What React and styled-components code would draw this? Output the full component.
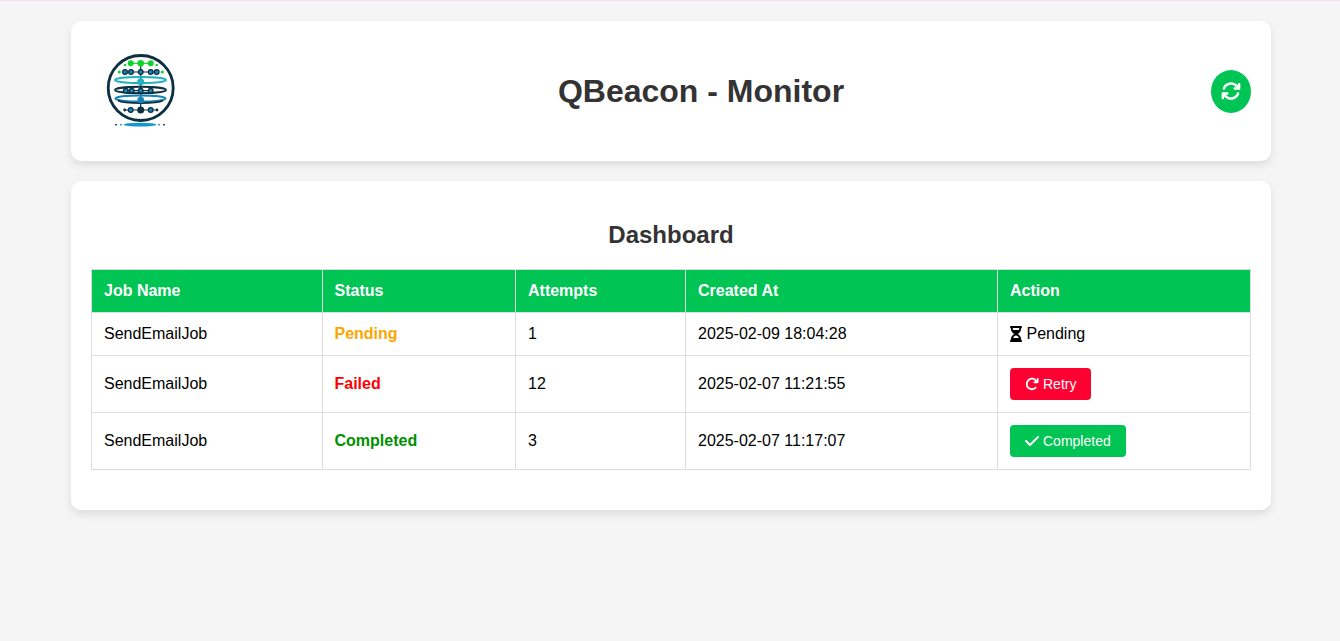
import styled, { createGlobalStyle } from 'styled-components';
import { FaHourglassHalf } from 'react-icons/fa';
import { FaArrowsRotate, FaArrowRotateRight, FaCheck } from 'react-icons/fa6';

const jobs = [
  { name: 'SendEmailJob', status: 'Pending', attempts: 1, created: '2025-02-09 18:04:28' },
  { name: 'SendEmailJob', status: 'Failed', attempts: 12, created: '2025-02-07 11:21:55' },
  { name: 'SendEmailJob', status: 'Completed', attempts: 3, created: '2025-02-07 11:17:07' },
];

const statusColors = {
  Pending: '#ffa500',
  Failed: '#ff0000',
  Completed: '#008f00',
};

// logo nodes, one list per row of the drawing
const nodeRows = [
  { y: 31, xs: [34, 40, 49.7, 59.7, 65.7] },
  { y: 49.7, xs: [34.7, 40.7, 49.7, 59.7] },
  { y: 69, xs: [39.7, 59.7] },
];

function Logo() {
  const dark = '#0d2f3f';
  const blue = '#1583b5';
  const teal = '#22b2bd';
  const green = '#0fd32c';
  return (
    <svg width="100" height="100" viewBox="0 0 100 100" aria-label="QBeacon logo">
      <circle cx="49.7" cy="47" r="32.5" fill="none" stroke={dark} strokeWidth="2.8" />
      <path d="M49.7 23V70" stroke={dark} strokeWidth="1.2" />
      <path d="M39.7 22.3H59.7" stroke={green} strokeWidth="1.2" />
      <circle cx="39.7" cy="22.3" r="3" fill={green} />
      <circle cx="49.7" cy="22.3" r="3.3" fill={green} />
      <circle cx="59.7" cy="22.3" r="3" fill={green} />
      <circle cx="34" cy="24" r="1.3" fill={green} />
      <circle cx="65.7" cy="24" r="1.3" fill={green} />
      <circle cx="28.3" cy="31" r="1.6" fill={green} />
      <circle cx="71.3" cy="31" r="1.6" fill={green} />
      <path d="M34 31H66M35 49.7H60M34 69H66" stroke={dark} strokeWidth="1.2" />
      <ellipse cx="49.5" cy="39" rx="25.5" ry="3" fill="none" stroke={teal} strokeWidth="2" />
      <ellipse cx="49.5" cy="49" rx="25.5" ry="3.2" fill="none" stroke={dark} strokeWidth="1.9" />
      <ellipse cx="49.5" cy="57.5" rx="25" ry="3" fill="none" stroke={blue} strokeWidth="2" />
      <path d="M27 59.5C33 63 66 63 72 59.5" fill="none" stroke={dark} strokeWidth="1.6" />
      {nodeRows.map((row) =>
        row.xs.map((x) => (
          <circle key={`${row.y}-${x}`} cx={x} cy={row.y} r="2.4" fill={blue} stroke={dark} strokeWidth="1.2" />
        ))
      )}
      <circle cx="49.7" cy="40.7" r="3.5" fill={teal} />
      <circle cx="49.7" cy="59" r="3.3" fill={blue} />
      <circle cx="33.7" cy="69" r="1.4" fill={dark} />
      <circle cx="66" cy="69" r="1.4" fill={dark} />
      <circle cx="49.7" cy="69" r="3.5" fill={dark} />
      <ellipse cx="49" cy="83.7" rx="16" ry="1.9" fill="#1297cf" />
      <circle cx="25" cy="83.7" r="0.9" fill={dark} />
      <circle cx="30" cy="83.7" r="0.9" fill={blue} />
      <circle cx="68" cy="83.7" r="0.9" fill={blue} />
      <circle cx="73" cy="83.7" r="0.9" fill={dark} />
    </svg>
  );
}

function Action({ status }) {
  if (status === 'Pending') {
    return (
      <PendingLabel>
        <HourglassIcon /> Pending
      </PendingLabel>
    );
  }
  if (status === 'Failed') {
    return (
      <ActionButton $bg="#ff0033">
        <FaArrowRotateRight size={14} /> Retry
      </ActionButton>
    );
  }
  return (
    <ActionButton $bg="#00c453">
      <CheckIcon /> Completed
    </ActionButton>
  );
}

export default function App() {
  return (
    <>
      <GlobalStyle />
      <Page>
        <Container>
          <Header>
            <Logo />
            <Title>QBeacon - Monitor</Title>
            <RefreshButton aria-label="Refresh">
              <FaArrowsRotate size={20} />
            </RefreshButton>
          </Header>
          <Panel>
            <PanelTitle>Dashboard</PanelTitle>
            <Table>
              <colgroup>
                <col width="230.5" />
                <col width="193.5" />
                <col width="170" />
                <col width="312" />
                <col width="253" />
              </colgroup>
              <thead>
                <tr>
                  <Th>Job Name</Th>
                  <Th>Status</Th>
                  <Th>Attempts</Th>
                  <Th>Created At</Th>
                  <Th>Action</Th>
                </tr>
              </thead>
              <tbody>
                {jobs.map((job) => (
                  <tr key={job.created}>
                    <Td>{job.name}</Td>
                    <Td>
                      <Status $color={statusColors[job.status]}>{job.status}</Status>
                    </Td>
                    <Td>{job.attempts}</Td>
                    <Td>{job.created}</Td>
                    <Td>
                      <Action status={job.status} />
                    </Td>
                  </tr>
                ))}
              </tbody>
            </Table>
          </Panel>
        </Container>
      </Page>
    </>
  );
}

const GlobalStyle = createGlobalStyle`
  * {
    box-sizing: border-box;
  }
  html, body {
    margin: 0;
    padding: 0;
    background: #f5f5f5;
    font-family: 'Liberation Sans', Arial, sans-serif;
  }
`;

const Page = styled.div`
  min-height: 641px;
  border-top: 1px solid #f1dff1;
  padding: 20px 0 0 71px;
`;

const Container = styled.main`
  width: 1200px;
  display: flex;
  flex-direction: column;
  gap: 20px;
`;

const Header = styled.header`
  height: 140px;
  padding: 0 20px;
  display: flex;
  align-items: center;
  justify-content: space-between;
  background: #fff;
  border-radius: 10px;
  box-shadow: 0 4px 8px rgba(0, 0, 0, 0.1);
`;

const Title = styled.h1`
  margin: 0;
  font-size: 32px;
  font-weight: 700;
  color: #333;
`;

const RefreshButton = styled.button`
  width: 40px;
  height: 43px;
  padding: 0;
  border: none;
  border-radius: 50%;
  display: flex;
  align-items: center;
  justify-content: center;
  background: #00c453;
  color: #fff;
`;

const Panel = styled.section`
  padding: 20px;
  background: #fff;
  border-radius: 10px;
  box-shadow: 0 4px 8px rgba(0, 0, 0, 0.1);
`;

const PanelTitle = styled.h2`
  margin: 20px 0;
  font-size: 24px;
  font-weight: 700;
  line-height: 28px;
  text-align: center;
  color: #333;
`;

const Table = styled.table`
  width: 1159px;
  table-layout: fixed;
  border-collapse: collapse;
  margin-bottom: 20px;
  font-size: 16px;
`;

const Th = styled.th`
  height: 43px;
  padding: 12px;
  border: 1px solid #ddd;
  background: #00c453;
  color: #fff;
  font-weight: 700;
  text-align: left;
`;

const Td = styled.td`
  padding: 12px;
  border: 1px solid #ddd;
  color: #000;
  text-align: left;
  line-height: 18px;
`;

const Status = styled.span`
  font-weight: 700;
  color: ${(props) => props.$color};
`;

const PendingLabel = styled.span`
  display: inline-flex;
  align-items: center;
  gap: 4.5px;
  vertical-align: top;
`;

const HourglassIcon = styled(FaHourglassHalf)`
  width: 12px;
  height: 16px;
`;

const CheckIcon = styled(FaCheck)`
  width: 14px;
  height: 16px;
`;

const ActionButton = styled.button`
  height: 32px;
  padding: 0 15px;
  border: none;
  border-radius: 4px;
  display: inline-flex;
  align-items: center;
  gap: 4px;
  background: ${(props) => props.$bg};
  color: #fff;
  font-family: inherit;
  font-size: 14px;
  vertical-align: top;
`;
